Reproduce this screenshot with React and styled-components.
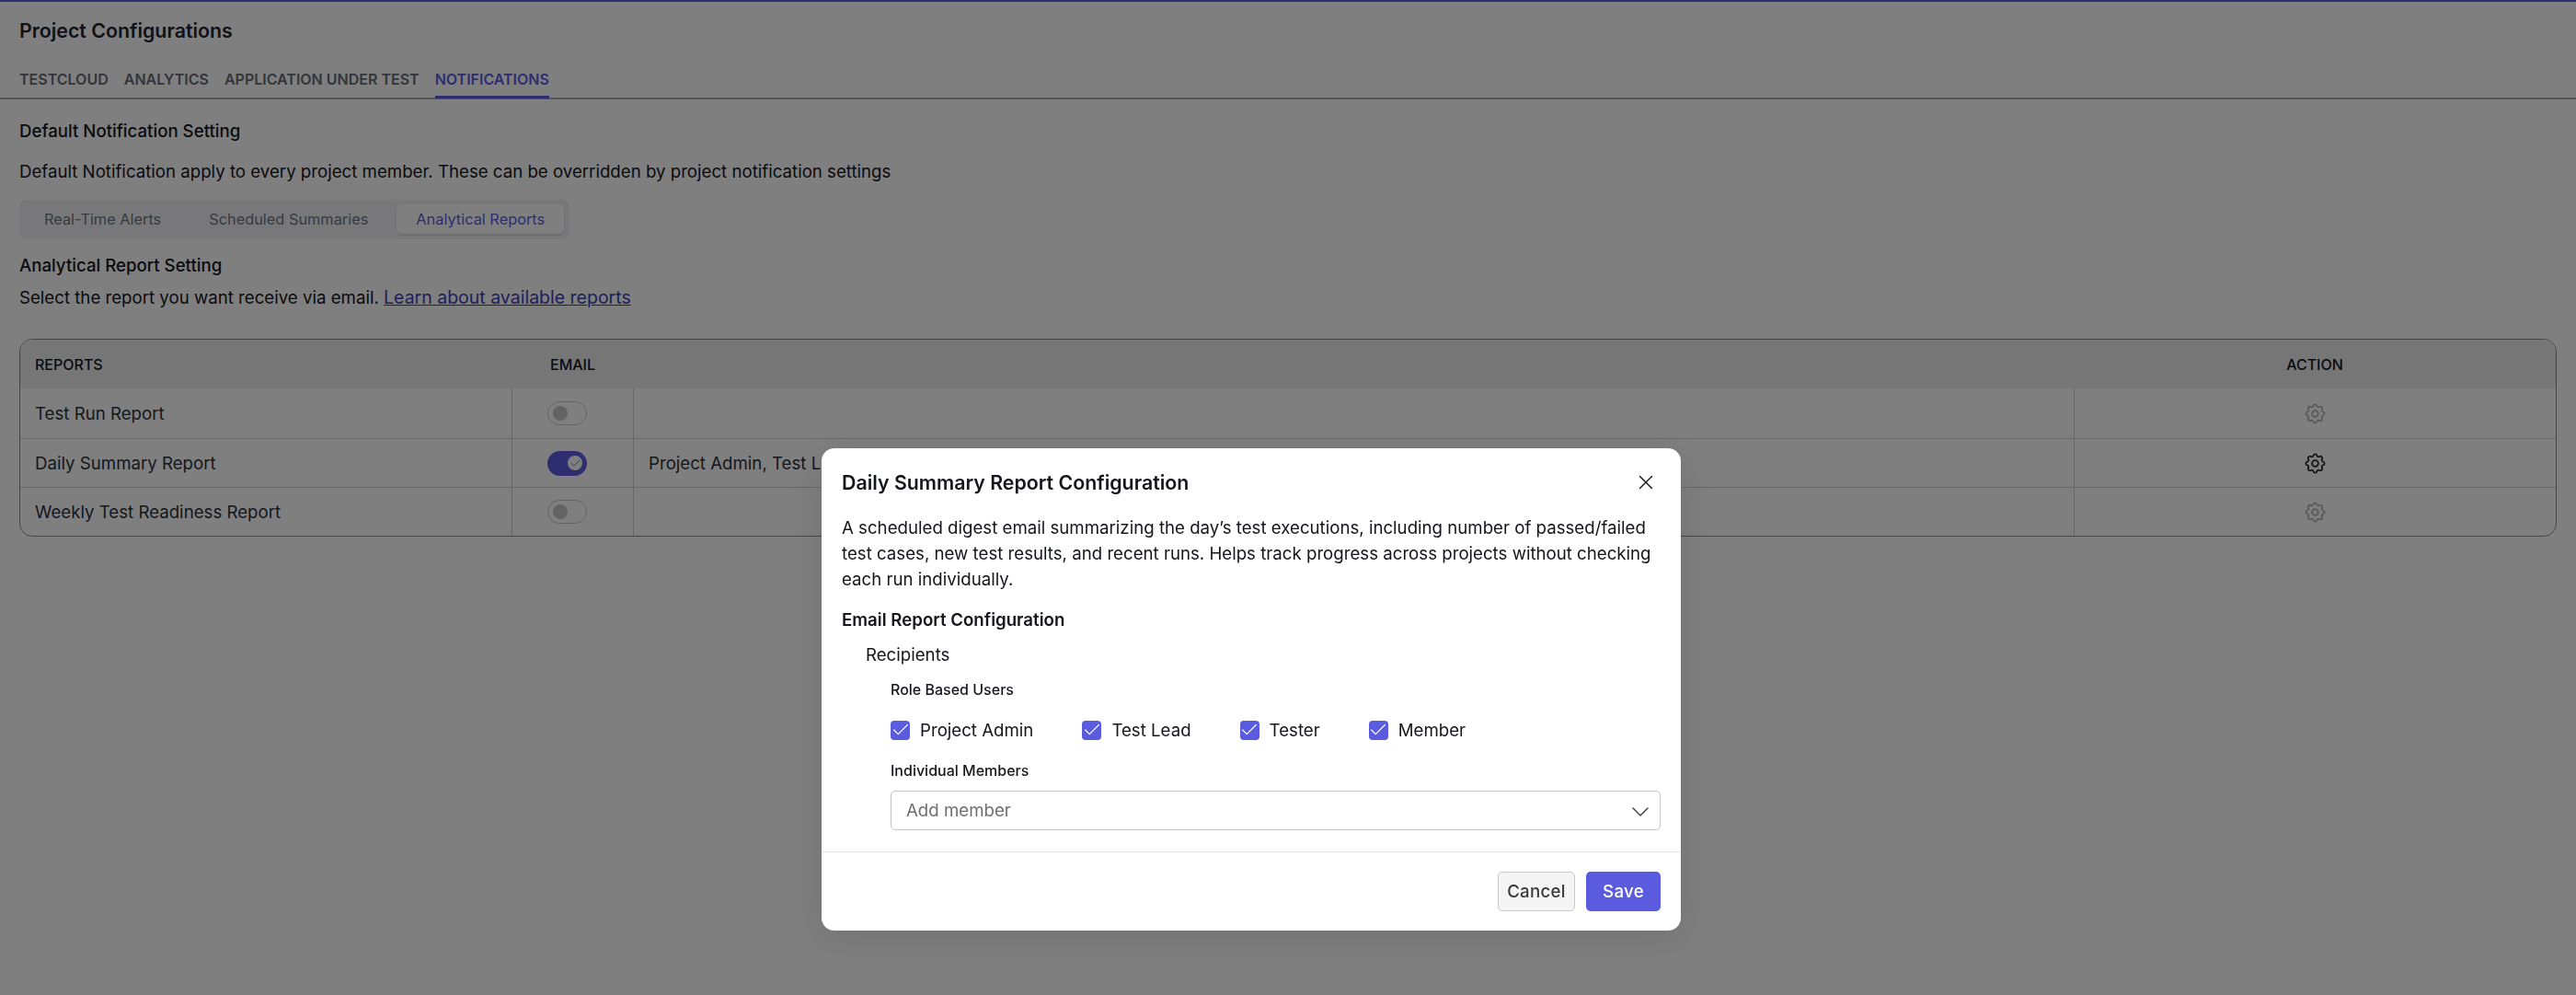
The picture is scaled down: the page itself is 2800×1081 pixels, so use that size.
import styled, { createGlobalStyle } from "styled-components";
import { TbSettings } from "react-icons/tb";
import { X, ChevronDown, Check } from "lucide-react";

const reports = [
  { id: 1, name: "Test Run Report", on: false, recipients: "" },
  { id: 2, name: "Daily Summary Report", on: true, recipients: "Project Admin, Test Lead, Tester, Member" },
  { id: 3, name: "Weekly Test Readiness Report", on: false, recipients: "" },
];

const App = () => {
  return (
    <>
      <GlobalStyle />
      <Page>
        <Title>Project Configurations</Title>
        <Tabs>
          <Tab>Testcloud</Tab>
          <Tab>Analytics</Tab>
          <Tab>Application Under Test</Tab>
          <Tab $active>Notifications</Tab>
        </Tabs>
        <Content>
          <SectionTitle>Default Notification Setting</SectionTitle>
          <Description>
            Default Notification apply to every project member. These can be overridden by project notification settings
          </Description>
          <Segments>
            <Segment>Real-Time Alerts</Segment>
            <Segment>Scheduled Summaries</Segment>
            <Segment $active>Analytical Reports</Segment>
          </Segments>
          <SectionTitle $small>Analytical Report Setting</SectionTitle>
          <Hint>
            Select the report you want receive via email. <LearnLink href="#">Learn about available reports</LearnLink>
          </Hint>
          <Table>
            <HeadRow>
              <HeadCell>Reports</HeadCell>
              <HeadCell $email>Email</HeadCell>
              <HeadCell />
              <HeadCell $center>Action</HeadCell>
            </HeadRow>
            {reports.map((report) => (
              <Row key={report.id}>
                <Cell>{report.name}</Cell>
                <Cell $divided $toggle>
                  <Toggle $on={report.on}>
                    <Knob $on={report.on}>{report.on && <Check size={13} strokeWidth={1.6} />}</Knob>
                  </Toggle>
                </Cell>
                <Cell $divided>{report.recipients}</Cell>
                <Cell $divided $center>
                  <Gear $on={report.on}>
                    <TbSettings size={27} strokeWidth={1.6} />
                  </Gear>
                </Cell>
              </Row>
            ))}
          </Table>
        </Content>
      </Page>
      <Overlay>
        <Modal>
          <ModalHeader>
            <ModalTitle>Daily Summary Report Configuration</ModalTitle>
            <CloseButton>
              <X size={26} strokeWidth={1.3} />
            </CloseButton>
          </ModalHeader>
          <ModalBody>
            <ModalText>
              A scheduled digest email summarizing the day’s test executions, including number of passed/failed test
              cases, new test results, and recent runs. Helps track progress across projects without checking each run
              individually.
            </ModalText>
            <FormHeading>Email Report Configuration</FormHeading>
            <Recipients>Recipients</Recipients>
            <FieldGroup>
              <FieldLabel>Role Based Users</FieldLabel>
              <CheckRow>
                {["Project Admin", "Test Lead", "Tester", "Member"].map((role) => (
                  <CheckItem key={role}>
                    <CheckBox>
                      <Check size={22} strokeWidth={1.3} />
                    </CheckBox>
                    {role}
                  </CheckItem>
                ))}
              </CheckRow>
              <FieldLabel>Individual Members</FieldLabel>
              <Select>
                <span>Add member</span>
                <ChevronDown size={32} strokeWidth={1} />
              </Select>
            </FieldGroup>
          </ModalBody>
          <ModalFooter>
            <CancelButton>Cancel</CancelButton>
            <SaveButton>Save</SaveButton>
          </ModalFooter>
        </Modal>
      </Overlay>
    </>
  );
};

const GlobalStyle = createGlobalStyle`
  html, body {
    margin: 0;
    background: #fff;
    font-family: Inter, "Liberation Sans", sans-serif;
  }
  * {
    box-sizing: border-box;
  }
`;

const Page = styled.div`
  height: 1081px;
  overflow: hidden;
  border-top: 2px solid #5b5be0;
  color: #1f2430;
`;

const Title = styled.h1`
  margin: 0;
  padding: 17px 21px 0;
  font-size: 21.33px;
  line-height: 28px;
  font-weight: 600;
`;

const Tabs = styled.div`
  display: flex;
  gap: 17px;
  height: 61px;
  padding: 19px 21px 0;
  border-bottom: 2px solid #a8a8a8;
`;

const Tab = styled.div`
  height: 41px;
  font-size: 16px;
  line-height: 40px;
  font-weight: 600;
  text-transform: uppercase;
  color: ${(p) => (p.$active ? "#5b5be0" : "#666b76")};
  border-bottom: 3px solid ${(p) => (p.$active ? "#5b5be0" : "transparent")};
`;

const Content = styled.div`
  padding: 0 21px;
`;

const SectionTitle = styled.h2`
  margin: ${(p) => (p.$small ? "15px 0 0" : "21px 0 0")};
  font-size: 18.67px;
  line-height: 28px;
  font-weight: 500;
  color: #14161c;
`;

const Description = styled.p`
  margin: 16px 0 0;
  font-size: 18.67px;
  line-height: 28px;
  color: #14161c;
`;

const Segments = styled.div`
  display: flex;
  gap: 10px;
  width: fit-content;
  height: 43px;
  margin-top: 16px;
  padding: 5px 6px;
  border-radius: 6px;
  background: #f1f1f7;
`;

const Segment = styled.div`
  padding: 0 21px;
  height: 32px;
  font-size: 16.33px;
  line-height: 32px;
  border-radius: 5px;
  color: ${(p) => (p.$active ? "#5b5be0" : "#6f7480")};
  background: ${(p) => (p.$active ? "#ffffff" : "transparent")};
  box-shadow: ${(p) => (p.$active ? "0 1px 3px rgba(0, 0, 0, 0.15)" : "none")};
`;

const Hint = styled.p`
  margin: 6px 0 0;
  font-size: 18.67px;
  line-height: 28px;
  color: #14161c;
`;

const LearnLink = styled.a`
  font-size: 19.5px;
  color: #3f3fb0;
  text-decoration: underline;
`;

const Table = styled.div`
  width: 2758px;
  margin-top: 30px;
  border: 1px solid #8a8a8a;
  border-radius: 14px;
  overflow: hidden;
`;

const columns = "534px 132px 1566px 1fr";

const HeadRow = styled.div`
  display: grid;
  grid-template-columns: ${columns};
  height: 53px;
  background: #ececec;
`;

const HeadCell = styled.div`
  display: flex;
  align-items: center;
  justify-content: ${(p) => (p.$center ? "center" : "flex-start")};
  padding-left: ${(p) => (p.$center ? "0" : p.$email ? "42px" : "16px")};
  font-size: 16px;
  font-weight: 500;
  text-transform: uppercase;
  color: #14161c;
`;

const Row = styled.div`
  display: grid;
  grid-template-columns: ${columns};
  height: 53px;
  border-top: 1px solid #cfcfcf;
  &:nth-child(2) {
    height: 54px;
    border-top: none;
  }
`;

const Cell = styled.div`
  display: flex;
  align-items: center;
  justify-content: ${(p) => (p.$center ? "center" : "flex-start")};
  padding-left: ${(p) => (p.$center ? "0" : p.$toggle ? "38px" : "16px")};
  font-size: 18.67px;
  color: #2b303b;
  border-left: ${(p) => (p.$divided ? "1px solid #cfcfcf" : "none")};
`;

const Toggle = styled.div`
  display: flex;
  align-items: center;
  justify-content: ${(p) => (p.$on ? "flex-end" : "flex-start")};
  width: 43px;
  height: ${(p) => (p.$on ? "27px" : "26px")};
  padding: 0 5px;
  border-radius: 14px;
  background: ${(p) => (p.$on ? "#5b5be0" : "transparent")};
  border: ${(p) => (p.$on ? "none" : "1px solid #c8c8c8")};
`;

const Knob = styled.div`
  display: flex;
  align-items: center;
  justify-content: center;
  width: 16px;
  height: 16px;
  border-radius: 50%;
  background: ${(p) => (p.$on ? "#ffffff" : "#c6c6c6")};
  color: #5b5be0;
`;

const Gear = styled.div`
  display: flex;
  color: #2b2b2b;
  opacity: ${(p) => (p.$on ? 1 : 0.35)};
`;

const Overlay = styled.div`
  position: fixed;
  inset: 0;
  padding: 487px 0 0 893px;
  background: rgba(0, 0, 0, 0.5);
`;

const Modal = styled.div`
  display: flex;
  flex-direction: column;
  width: 934px;
  height: 524px;
  border-radius: 14px;
  background: #ffffff;
  box-shadow: 0 8px 40px rgba(0, 0, 0, 0.12);
  color: #14161c;
`;

const ModalHeader = styled.div`
  display: flex;
  align-items: center;
  justify-content: space-between;
  height: 50px;
  padding: 23px 25px 0 22px;
`;

const ModalTitle = styled.h3`
  margin: 0;
  font-size: 21.33px;
  line-height: 28px;
  font-weight: 600;
`;

const CloseButton = styled.div`
  display: flex;
  color: #14161c;
`;

const ModalBody = styled.div`
  flex: 1;
  padding: 0 22px;
`;

const ModalText = styled.p`
  margin: 23px 0 0;
  font-size: 18.67px;
  line-height: 28px;
`;

const FormHeading = styled.div`
  margin-top: 16px;
  font-size: 18.67px;
  line-height: 28px;
  font-weight: 600;
`;

const Recipients = styled.div`
  margin: 10px 0 0 26px;
  font-size: 18.67px;
  line-height: 28px;
`;

const FieldGroup = styled.div`
  margin: 10px 0 0 53px;
`;

const FieldLabel = styled.div`
  font-size: 16px;
  line-height: 26px;
  font-weight: 500;
`;

const CheckRow = styled.div`
  display: flex;
  gap: 53px;
  margin: 18px 0;
`;

const CheckItem = styled.label`
  display: flex;
  align-items: center;
  gap: 11px;
  height: 26px;
  font-size: 18.67px;
`;

const CheckBox = styled.span`
  display: flex;
  align-items: center;
  justify-content: center;
  width: 21px;
  height: 21px;
  border-radius: 4px;
  background: #5b5be0;
  color: #ffffff;
  svg {
    flex: none;
  }
`;

const Select = styled.div`
  display: flex;
  align-items: center;
  justify-content: space-between;
  height: 43px;
  margin-top: 9px;
  padding: 0 5px 0 16px;
  border: 1px solid #c4c4c4;
  border-radius: 5px;
  font-size: 18.67px;
  color: #6f6f6f;
  svg {
    margin-top: 3px;
    color: #3a3a3a;
  }
`;

const ModalFooter = styled.div`
  display: flex;
  justify-content: flex-end;
  gap: 12px;
  height: 86px;
  padding: 21px 22px 0;
  border-top: 1px solid #e6e6e6;
`;

const CancelButton = styled.button`
  width: 84px;
  height: 43px;
  padding: 0;
  border: 1px solid #c8c8c8;
  border-radius: 5px;
  background: #f4f4f4;
  font: 500 18.67px Inter, sans-serif;
  letter-spacing: 0.3px;
  color: #3a3a3a;
`;

const SaveButton = styled.button`
  width: 81px;
  height: 43px;
  padding: 0;
  border: none;
  border-radius: 5px;
  background: #5b5be0;
  font: 500 18.67px Inter, sans-serif;
  letter-spacing: 0.3px;
  color: #ffffff;
`;

export default App;
